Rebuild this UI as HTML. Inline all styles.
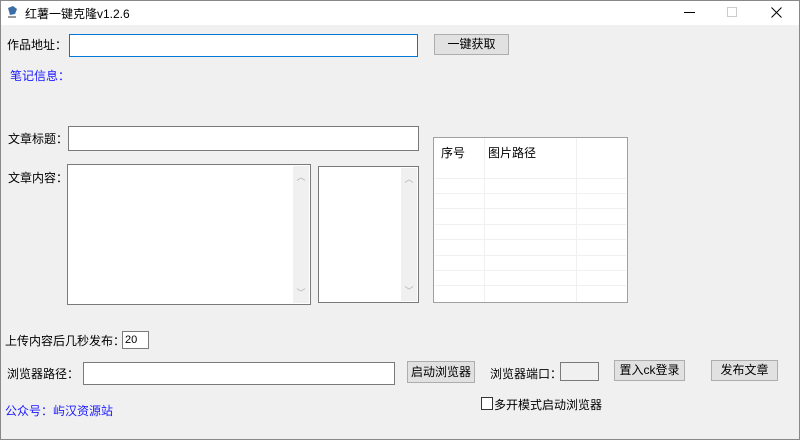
<!DOCTYPE html>
<html><head><meta charset="utf-8"><style>
*{box-sizing:border-box;margin:0;padding:0}
body{width:800px;height:440px;background:#f0f0f0;font-family:"Liberation Sans","Noto Sans CJK SC",sans-serif;font-size:12px;color:#000;position:relative;overflow:hidden}
.a{position:absolute;white-space:nowrap}
.in{position:absolute;background:#fff;border:1px solid #7a7a7a}
.btn{position:absolute;background:#e1e1e1;border:1px solid #adadad;text-align:center;line-height:18px}
.blue{color:#1a1aff}
.sb{position:absolute;top:1px;bottom:1px;right:1px;width:16px;background:#f0f0f0;color:#b0b0b0;font-size:9px;text-align:center}
.row{position:absolute;left:1px;right:1px;height:1px;background:#f0f0f0}
</style></head><body>
<div class="a" style="left:0;top:0;width:800px;height:440px;border:1px solid #888"></div>
<div class="a" style="left:1px;top:1px;width:798px;height:24px;background:#fff"></div>
<svg class="a" style="left:6px;top:5px" width="12" height="14"><path d="M2 3 L7 1 L11 4 L9 9 L4 10 Z" fill="#3a6ea5"/><rect x="2" y="11" width="8" height="2" fill="#999"/></svg>
<div class="a" style="left:25px;top:5px;font-size:12px">红薯一键克隆v1.2.6</div>
<div class="a" style="left:684px;top:12px;width:11px;height:1px;background:#000"></div>
<div class="a" style="left:727px;top:7px;width:10px;height:10px;border:1px solid #ccc"></div>
<svg class="a" style="left:771px;top:7px" width="11" height="11"><path d="M0.5 0.5L10.5 10.5M10.5 0.5L0.5 10.5" stroke="#000" stroke-width="1"/></svg>

<div class="a" style="left:7px;top:36px">作品地址：</div>
<div class="in" style="left:69px;top:34px;width:349px;height:23px;border-color:#0078d7"></div>
<div class="btn" style="left:434px;top:34px;width:75px;height:21px;line-height:19px">一键获取</div>
<div class="a blue" style="left:10px;top:67px">笔记信息：</div>

<div class="a" style="left:8px;top:130px">文章标题：</div>
<div class="in" style="left:68px;top:126px;width:351px;height:25px"></div>
<div class="a" style="left:8px;top:169px">文章内容：</div>
<div class="in" style="left:67px;top:164px;width:244px;height:141px"><div class="sb"><div style="margin-top:4px">︿</div><div style="position:absolute;bottom:4px;width:16px">﹀</div></div></div>
<div class="in" style="left:318px;top:166px;width:101px;height:137px"><div class="sb"><div style="margin-top:4px">︿</div><div style="position:absolute;bottom:4px;width:16px">﹀</div></div></div>

<div class="in" style="left:433px;top:137px;width:195px;height:166px;border-color:#a0a0a0">
<div class="a" style="left:7px;top:6px">序号</div>
<div class="a" style="left:54px;top:6px">图片路径</div>
<div class="a" style="left:50px;top:0;width:1px;height:164px;background:#f0f0f0"></div>
<div class="a" style="left:142px;top:0;width:1px;height:164px;background:#f0f0f0"></div>
<div class="row" style="top:40px"></div><div class="row" style="top:55px"></div><div class="row" style="top:70px"></div><div class="row" style="top:86px"></div><div class="row" style="top:101px"></div><div class="row" style="top:117px"></div><div class="row" style="top:132px"></div><div class="row" style="top:147px"></div>
</div>

<div class="a" style="left:5px;top:332px">上传内容后几秒发布：</div>
<div class="in" style="left:122px;top:331px;width:27px;height:18px;font-size:11px;padding:2px 0 0 2px">20</div>
<div class="a" style="left:7px;top:365px">浏览器路径：</div>
<div class="in" style="left:83px;top:362px;width:312px;height:23px"></div>
<div class="btn" style="left:407px;top:361px;width:68px;height:22px;line-height:20px">启动浏览器</div>
<div class="a" style="left:490px;top:365px">浏览器端口：</div>
<div class="in" style="left:560px;top:362px;width:39px;height:19px;background:#f0f0f0"></div>
<div class="btn" style="left:614px;top:360px;width:71px;height:21px">置入ck登录</div>
<div class="btn" style="left:711px;top:360px;width:67px;height:21px">发布文章</div>
<div class="in" style="left:481px;top:397px;width:12px;height:13px;border-color:#333"></div>
<div class="a" style="left:494px;top:396px">多开模式启动浏览器</div>
<div class="a blue" style="left:5px;top:402px">公众号：屿汉资源站</div>
</body></html>
